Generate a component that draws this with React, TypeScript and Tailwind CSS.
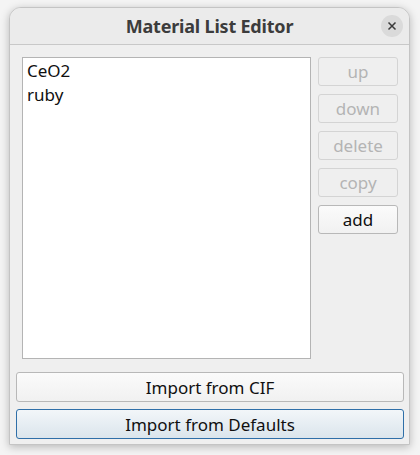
const font = { fontFamily: '"Noto Sans", "Open Sans", sans-serif' };

function SideButton({ label, enabled }: { label: string; enabled?: boolean }) {
  return (
    <button
      className={
        enabled
          ? "h-[29px] w-[80px] rounded-[3px] border border-[#b8b8b8] bg-gradient-to-b from-[#fbfbfb] to-[#f1f1f1] text-[17px] leading-none text-[#101010]"
          : "h-[29px] w-[80px] rounded-[3px] border border-[#d4d4d4] bg-[#efefef] text-[17px] leading-none text-[#b4b4b4]"
      }
    >
      {label}
    </button>
  );
}

export default function App() {
  return (
    <div className="w-[420px] h-[455px] bg-[#f4f4f4] pt-[7px] pl-[9px]" style={font}>
      <div className="w-[401px] h-[438px] rounded-t-[12px] border border-[#c4c4c4] bg-[#efefef] shadow-[0_2px_8px_rgba(0,0,0,0.25)] flex flex-col overflow-hidden">
        <div className="h-[37px] shrink-0 flex items-center justify-center relative bg-[#ebebeb] border-b border-[#c8c8c8]">
          <span className="text-[18px] font-bold text-[#3c3c3c] tracking-[-0.2px]">Material List Editor</span>
          <div className="absolute right-[6px] top-[7px] w-[22px] h-[22px] rounded-full bg-[#dadada] flex items-center justify-center">
            <svg width="10" height="10" viewBox="0 0 10 10">
              <path d="M1.5 1.5 L8.5 8.5 M8.5 1.5 L1.5 8.5" stroke="#3a3a3a" strokeWidth="1.5" />
            </svg>
          </div>
        </div>
        <div className="flex flex-col px-[6px] pt-[12px] gap-[7px]">
          <div className="flex pl-[6px] gap-[7px]">
            <div className="w-[289px] h-[302px] bg-white border border-[#b4b4b4] px-[4px] pt-[1px] text-[17px] leading-[24px] text-[#101010]">
              <div>CeO2</div>
              <div>ruby</div>
            </div>
            <div className="flex flex-col gap-[8px]">
              <SideButton label="up" />
              <SideButton label="down" />
              <SideButton label="delete" />
              <SideButton label="copy" />
              <SideButton label="add" enabled />
            </div>
          </div>
          <div className="flex flex-col gap-[7px] mt-[6px]">
            <button className="h-[30px] w-[388px] rounded-[3px] border border-[#b8b8b8] bg-gradient-to-b from-[#fbfbfb] to-[#f1f1f1] text-[17px] leading-none text-[#101010]">
              Import from CIF
            </button>
            <button className="h-[30px] w-[388px] rounded-[3px] border border-[#2f6fa8] bg-gradient-to-b from-[#f2f6f9] to-[#dbe5ec] text-[17px] leading-none text-[#101010]">
              Import from Defaults
            </button>
          </div>
        </div>
      </div>
    </div>
  );
}
